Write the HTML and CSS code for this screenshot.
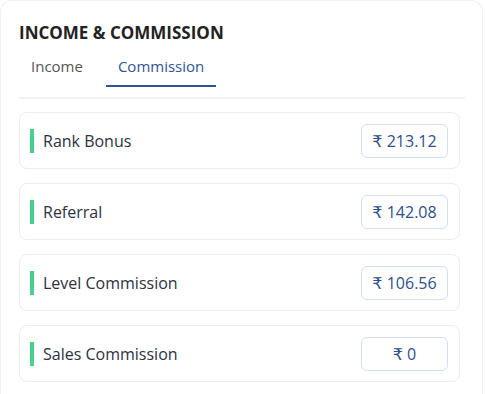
FILE: index.html
```html
<!DOCTYPE html>
<html lang="en">
<head>
    <meta charset="UTF-8">
    <title>Income &amp; Commission</title>
    <link rel="stylesheet" href="styles.css">
</head>
<body>
<div class="panel">
    <h2 class="title">INCOME &amp; COMMISSION</h2>
    <div class="tabs">
        <span class="tab">Income</span>
        <span class="tab active">Commission</span>
    </div>
    <div class="list">
        <div class="row">
            <span class="mark"></span>
            <span class="name">Rank Bonus</span>
            <span class="value"><span class="cur">₹</span> 213.12</span>
        </div>
        <div class="row">
            <span class="mark"></span>
            <span class="name">Referral</span>
            <span class="value"><span class="cur">₹</span> 142.08</span>
        </div>
        <div class="row">
            <span class="mark"></span>
            <span class="name">Level Commission</span>
            <span class="value"><span class="cur">₹</span> 106.56</span>
        </div>
        <div class="row">
            <span class="mark"></span>
            <span class="name">Sales Commission</span>
            <span class="value"><span class="cur">₹</span> 0</span>
        </div>
    </div>
</div>
</body>
</html>
```

FILE: styles.css
```css
* {
    margin: 0;
    padding: 0;
    box-sizing: border-box;
}

body {
    background: #fff;
    font-family: "Open Sans", "Noto Sans", sans-serif;
}

.panel {
    width: 483px;
    height: 394px;
    border: 1px solid #f0f0f0;
    /*底边超出截图范围*/
    border-bottom: none;
    border-radius: 12px 12px 0 0;
    padding: 20px 18px 0 18px;
}

.title {
    font-size: 17px;
    font-weight: 700;
    color: #222;
    line-height: 24px;
}

.tabs {
    display: flex;
    gap: 11px;
    margin-top: 10px;
    border-bottom: 2px solid #f2f2f2;
    width: 446px;
    padding-bottom: 10px;
}

.tab {
    font-size: 15px;
    color: #555;
    padding: 0 12px 8px;
    line-height: 22px;
    border-bottom: 2px solid transparent;
}

.tab.active {
    color: #2f5597;
    border-bottom-color: #2b5592;
}

.list {
    display: flex;
    flex-direction: column;
    gap: 14px;
    margin-top: 13px;
    width: 441px;
}

.row {
    display: flex;
    align-items: center;
    height: 57px;
    border: 1px solid #ececec;
    border-radius: 8px;
    padding: 0 11px 0 10px;
}

.mark {
    width: 4px;
    height: 24px;
    background: #47d18c;
    /*色条与文字的间距*/
    margin-right: 9px;
}

.name {
    flex: 1;
    font-size: 16px;
    color: #2d3142;
}

.value {
    width: 87px;
    height: 34px;
    line-height: 32px;
    text-align: center;
    border: 1px solid #cfdff9;
    border-radius: 6px;
    font-size: 16px;
    color: #2f4f8a;
}

.cur {
    /*卢比符号用 DejaVu，字形更大*/
    font-family: "DejaVu Sans", sans-serif;
}
```
